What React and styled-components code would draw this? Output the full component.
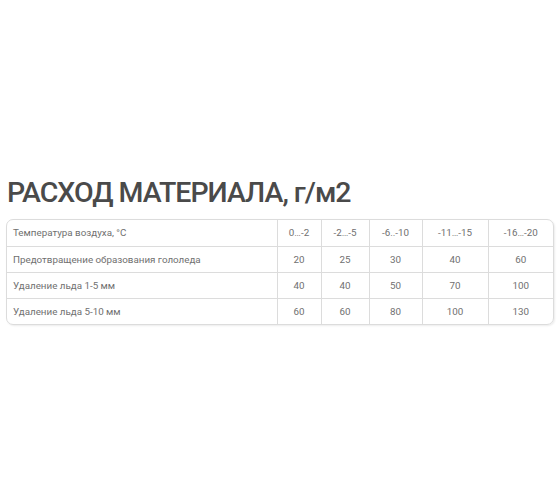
import React from "react";
import styled, { createGlobalStyle } from "styled-components";

const GlobalStyle = createGlobalStyle`
  html, body {
    margin: 0;
    padding: 0;
    background: #fff;
  }
  body {
    font-family: Roboto, "Open Sans", sans-serif;
  }
`;

const Page = styled.div`
  width: 560px;
  height: 504px;
  padding: 175px 6px 0 6px;
  box-sizing: border-box;
`;

const Title = styled.h2`
  margin: 0 0 8px 1px;
  font-size: 28.5px;
  line-height: 36px;
  font-weight: 500;
  letter-spacing: -1px;
  color: #4a4a4a;
`;

const Frame = styled.div`
  border: 1px solid #dcdcdc;
  border-radius: 7px;
  overflow: hidden;
  box-shadow: 1px 1px 2px rgba(0, 0, 0, 0.08);
  width: 546px;
`;

const Table = styled.table`
  width: 100%;
  table-layout: fixed;
  border-collapse: collapse;
  font-size: 9.8px;
  color: #707070;
`;

const Row = styled.tr`
  height: 26px;
  & + & td {
    border-top: 1px solid #dcdcdc;
  }
`;

const Cell = styled.td`
  padding: 0 6px;
  text-align: ${(p) => (p.$label ? "left" : "center")};
  white-space: nowrap;
  & + & {
    border-left: 1px solid #dcdcdc;
  }
`;

const widths = [270, 44, 48, 53, 66, 65];

const rows = [
  ["Температура воздуха, °С", "0…-2", "-2…-5", "-6..-10", "-11…-15", "-16…-20"],
  ["Предотвращение образования гололеда", "20", "25", "30", "40", "60"],
  ["Удаление льда 1-5 мм", "40", "40", "50", "70", "100"],
  ["Удаление льда 5-10 мм", "60", "60", "80", "100", "130"],
];

export default function App() {
  return (
    <Page>
      <GlobalStyle />
      <Title>РАСХОД МАТЕРИАЛА, г/м2</Title>
      <Frame>
        <Table>
          <colgroup>
            {widths.map((w, i) => (
              <col key={i} style={{ width: w }} />
            ))}
          </colgroup>
          <tbody>
            {rows.map((r, i) => (
              <Row key={i}>
                {r.map((c, j) => (
                  <Cell key={j} $label={j === 0}>
                    {c}
                  </Cell>
                ))}
              </Row>
            ))}
          </tbody>
        </Table>
      </Frame>
    </Page>
  );
}
